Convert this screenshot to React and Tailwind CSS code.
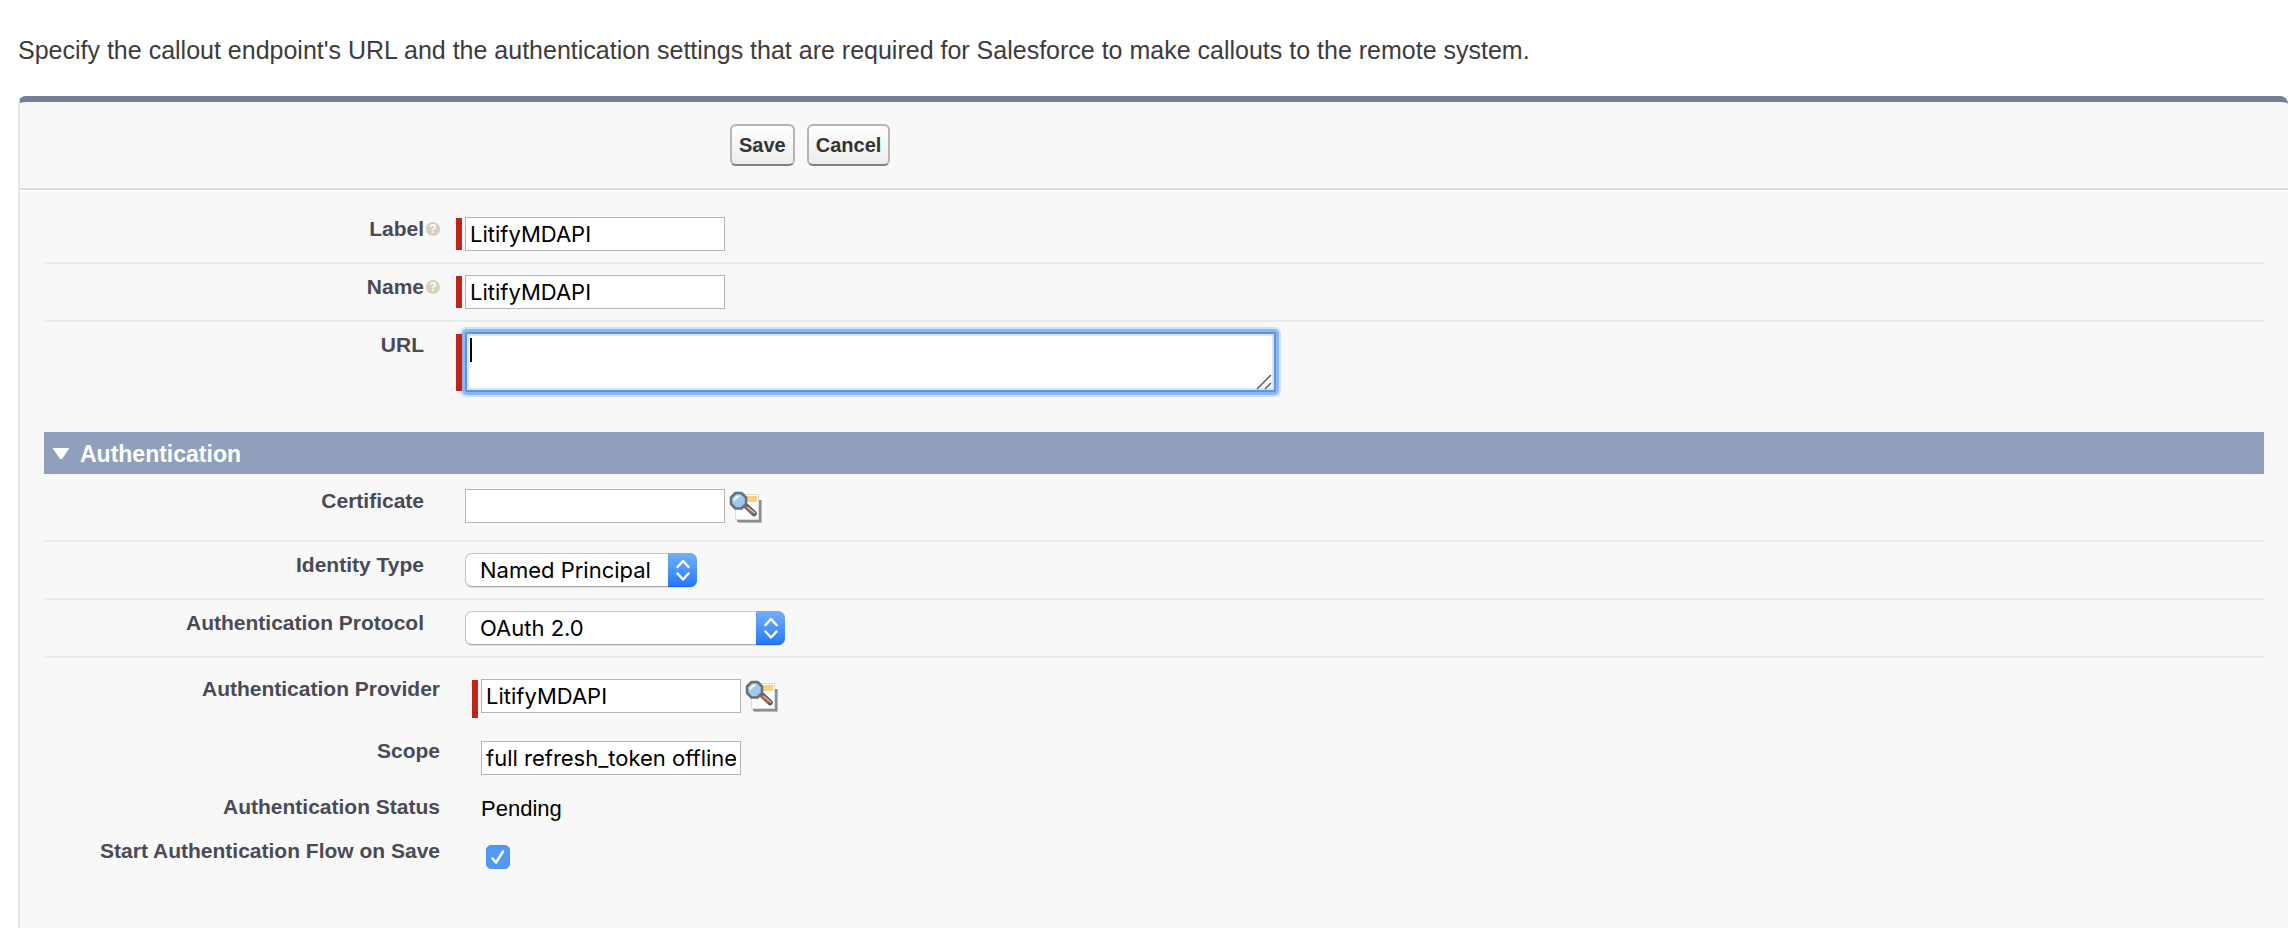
import { useState } from "react";

const inputClass =
  "h-[34px] w-[260px] border border-[#b5b5b5] bg-white px-1 font-[Inter,sans-serif] text-[22px] leading-7 text-black outline-none";

function LookupIcon() {
  return (
    <svg width="34" height="34" viewBox="0 0 34 34" fill="none" aria-hidden="true">
      <path d="M8 9H32V31H8Z" fill="#8f8f8f" />
      <path d="M9 31.500H32.500V9" stroke="#b9b9b9" strokeWidth="1" />
      <path d="M6.500 3.500H29.500V28.500H6.500Z" fill="#fdfdfd" stroke="#dadada" />
      <path d="M16 5H28V11H16Z" fill="#f8d27c" />
      <path d="M17 15L25 22.500" stroke="#58585c" strokeWidth="5.500" strokeLinecap="round" />
      <path d="M16 16L23 22.500" stroke="#b8662a" strokeWidth="2" strokeLinecap="round" />
      <path d="M18.500 16L25.500 22" stroke="#c9c9c9" strokeWidth="1.500" strokeLinecap="round" />
      <path d="M6.500 2H12.500L17 6.500V13L12.500 17.500H6.500L2 13V6.500Z" fill="#9fc9ea" stroke="#6a7078" strokeWidth="2.500" strokeLinejoin="round" />
      <path d="M4.500 11V7.500L7.500 4.500H12Z" fill="#e6f4fd" />
    </svg>
  );
}

function HelpIcon({ topic }) {
  return (
    <button
      type="button"
      aria-label={"Help for " + topic}
      className="mt-[5px] flex size-[14px] items-center justify-center rounded-full bg-[#d9cfbd] text-[12px] leading-none font-bold text-white"
    >
      ?
    </button>
  );
}

function Row({ id, label, help, required, nested, last, className = "pt-[11px] pb-[11px]", children }) {
  return (
    <div className={"flex items-start " + className + (last ? "" : " border-b-2 border-[#ebebeb]")}>
      <label
        htmlFor={id}
        className={"shrink-0 text-right text-[21px] leading-6 font-bold text-[#4a4a56] " + (nested ? "w-[396px]" : "w-[380px]")}
      >
        {label}
      </label>
      <div className="flex w-8 shrink-0 pl-[2px]">{help && <HelpIcon topic={label} />}</div>
      <div className={"flex min-w-0 flex-1 items-stretch gap-[3px] " + (nested ? "pt-[2px]" : "")}>
        <span className={"relative z-10 my-px w-[6px] shrink-0 " + (required ? "bg-[#bf2419]" : "")} />
        {children}
      </div>
    </div>
  );
}

function Select({ id, options, className }) {
  return (
    <div className={"relative h-[34px] " + className}>
      <select
        id={id}
        className="h-full w-full appearance-none rounded-[7px] border border-[#c8c8c8] border-b-[#ababab] bg-white pr-8 pl-[14px] font-[Inter,sans-serif] text-[22px] leading-7 text-black shadow-[0_1px_1px_#dcdcdc] outline-none"
      >
        {options.map((o) => (
          <option key={o}>{o}</option>
        ))}
      </select>
      <span className="pointer-events-none absolute inset-y-0 right-0 flex w-[29px] items-center justify-center rounded-r-[7px] border-b border-[#1a63e8] bg-linear-to-b from-[#72b0f7] to-[#2478f8]">
        <svg width="14" height="22" viewBox="0 0 14 22" fill="none" stroke="white" strokeWidth="2.500" strokeLinecap="round" strokeLinejoin="round" aria-hidden="true">
          <path d="M1.500 8L7 2L12.500 8M1.500 14.500L7 20.500L12.500 14.500" />
        </svg>
      </span>
    </div>
  );
}

export default function App() {
  const [open, setOpen] = useState(true);
  return (
    <main className="flex min-h-screen flex-col bg-white font-['Liberation_Sans',Arial,sans-serif]">
      <p className="px-[18px] pt-9 pb-8 text-[25px] leading-7 text-[#3c3c3c]">
        Specify the callout endpoint's URL and the authentication settings that are required for Salesforce to make
        callouts to the remote system.
      </p>
      <form
        onSubmit={(e) => e.preventDefault()}
        className="ml-[18px] flex-1 rounded-t-lg border-t-[6px] border-l-2 border-t-[#767e96] border-l-[#e6e6e6] bg-[#f8f8f8]"
      >
        <div className="flex gap-3 border-b-2 border-[#dbdbdb] pt-[22px] pb-[22px] pl-[710px]">
          {["Save", "Cancel"].map((t) => (
            <button
              key={t}
              type={t === "Save" ? "submit" : "button"}
              className="h-[42px] rounded-[6px] border-2 border-[#b5b5b5] border-b-[#7f7f7f] bg-linear-to-b from-white to-[#ececec] px-[7px] text-[20px] leading-6 font-bold text-[#333333]"
            >
              {t}
            </button>
          ))}
        </div>
        <div className="border-t-2 border-white px-6 pt-[14px]">
          <Row id="label" label="Label" help required>
            <input id="label" defaultValue="LitifyMDAPI" className={inputClass} />
          </Row>
          <Row id="name" label="Name" help required>
            <input id="name" defaultValue="LitifyMDAPI" className={inputClass} />
          </Row>
          <Row id="url" label="URL" required last className="pt-[11px] pb-10">
            <div className="relative -mt-px h-[60px] w-[811px]">
              <textarea
                id="url"
                className="block h-full w-full resize-none rounded-[2px] border-2 border-[#6292d3] bg-white px-1 py-1 text-[22px] leading-6 shadow-[inset_0_0_0_2px_#d0e4fd,0_0_0_3px_#8ab7f3,0_0_0_5px_#cee1f9] outline-none"
              />
              <span className="pointer-events-none absolute top-[6px] left-[5px] h-6 w-[2px] bg-black" />
              <svg width="16" height="16" viewBox="0 0 16 16" className="pointer-events-none absolute right-1 bottom-[2px]" stroke="#5c5c5c" strokeWidth="1.500" aria-hidden="true">
                <path d="M1 15L15 1M9 15L15 9" />
              </svg>
            </div>
          </Row>
          <h2 className="bg-[#919ebc] text-[23px] font-bold text-white">
            <button type="button" aria-expanded={open} onClick={() => setOpen(!open)} className="flex h-[42px] w-full items-center gap-[10px] pt-px pl-2 leading-7">
              <svg width="18" height="14" viewBox="0 0 18 14" fill="white" className={open ? "" : "-rotate-90"} aria-hidden="true">
                <path d="M0.500 1H17.500L10 12H8Z" />
              </svg>
              Authentication
            </button>
          </h2>
          {open && (
            <div>
              <Row id="cert" label="Certificate" className="pt-[15px] pb-[17px]">
                <input id="cert" className={inputClass} />
                <button type="button" aria-label="Certificate lookup" className="h-[34px] pt-[2px] pl-px">
                  <LookupIcon />
                </button>
              </Row>
              <Row id="identity" label="Identity Type">
                <Select id="identity" className="w-[232px]" options={["Named Principal", "Per User", "Anonymous"]} />
              </Row>
              <Row id="protocol" label="Authentication Protocol">
                <Select id="protocol" className="w-[320px]" options={["OAuth 2.0", "Password Authentication"]} />
              </Row>
              <Row id="provider" label="Authentication Provider" required nested last className="h-[81px] pt-[19px]">
                <input id="provider" defaultValue="LitifyMDAPI" className={inputClass} />
                <button type="button" aria-label="Authentication provider lookup" className="h-10 pb-1 pl-px">
                  <LookupIcon />
                </button>
              </Row>
              <Row id="scope" label="Scope" nested last className="h-14">
                <input id="scope" defaultValue="full refresh_token offline_access" className={inputClass} />
              </Row>
              <Row id="status" label="Authentication Status" nested last className="h-11">
                <output id="status" className="text-[22px] leading-6 text-black">Pending</output>
              </Row>
              <Row id="start" label="Start Authentication Flow on Save" nested last className="h-14">
                <span className="mt-1 ml-[5px] grid size-6 place-items-center">
                  <input id="start" type="checkbox" defaultChecked className="peer col-start-1 row-start-1 size-6 appearance-none rounded-[5px] border border-[#b5b5b5] bg-white checked:border-[#4a94f2] checked:bg-[#5199f5]" />
                  <svg width="16" height="16" viewBox="0 0 16 16" fill="none" stroke="white" strokeWidth="2.500" strokeLinecap="round" strokeLinejoin="round" className="pointer-events-none relative col-start-1 row-start-1 hidden peer-checked:block" aria-hidden="true">
                    <path d="M2.500 9.500L6 13.500L13 2.500" />
                  </svg>
                </span>
              </Row>
            </div>
          )}
        </div>
      </form>
    </main>
  );
}
